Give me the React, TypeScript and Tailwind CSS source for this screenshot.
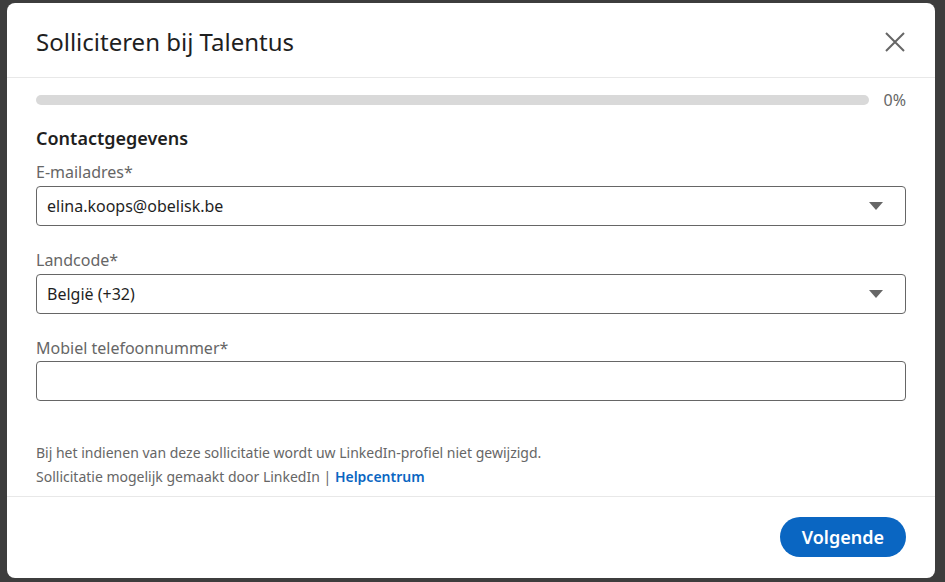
import React, { useState } from 'react';

const Caret: React.FC = () => (
    <svg width="16" height="8" viewBox="0 0 16 8" className="shrink-0">
        <path d="M1 0 H15 L8 8 Z" fill="#666666" />
    </svg>
);

const SelectField: React.FC<{ label: string; value: string }> = ({ label, value }) => (
    <div className="mt-[22px]">
        <div className="text-[16px] leading-[24px] text-[#666666]">{label}</div>
        <div className="mt-[2px] h-[40px] flex items-center justify-between rounded-[4px] border border-[#666666] pl-[10px] pr-[21px]">
            <span className="text-[16px] text-[#1f1f1f]">{value}</span>
            <Caret />
        </div>
    </div>
);

export default function App() {
    const [phone, setPhone] = useState('');

    return (
        <div className="w-[945px] h-[582px] bg-[#3d3d3d] pt-[3px] pl-[7px] font-['Noto_Sans',sans-serif] overflow-hidden">
            <div className="w-[928px] h-[575px] bg-white rounded-[8px] flex flex-col overflow-hidden">
                <div className="h-[75px] shrink-0 border-b border-[#e8e8e8] flex items-center justify-between pl-[29px] pr-[30px]">
                    <h2 className="mt-[3px] text-[24px] text-[#1f1f1f] leading-none">Solliciteren bij Talentus</h2>
                    <svg width="20" height="20" viewBox="0 0 20 20" className="mt-[3px]">
                        <path d="M1 1 L19 19 M19 1 L1 19" stroke="#666666" strokeWidth="2" />
                    </svg>
                </div>

                <div className="flex-1 px-[29px] pt-[10px]">
                    <div className="h-[24px] flex items-center">
                        <div className="flex-1 h-[10px] rounded-full bg-[#d9d9d9]" />
                        <span className="ml-[15px] text-[16px] text-[#666666]">0%</span>
                    </div>

                    <h3 className="mt-[14px] text-[18px] leading-[24px] font-semibold text-[#1f1f1f]">Contactgegevens</h3>

                    <div className="-mt-[12px]">
                        <SelectField label="E-mailadres*" value="elina.koops@obelisk.be" />
                    </div>
                    <SelectField label="Landcode*" value="België (+32)" />

                    <div className="mt-[22px]">
                        <div className="text-[16px] leading-[24px] text-[#666666]">Mobiel telefoonnummer*</div>
                        <input
                            value={phone}
                            onChange={(e) => setPhone(e.target.value)}
                            className="mt-[1px] w-full h-[40px] rounded-[4px] border border-[#666666] px-[10px] text-[16px] outline-none"
                        />
                    </div>

                    <div className="mt-[40px] text-[14px] leading-[24px] text-[#666666]">
                        <p>Bij het indienen van deze sollicitatie wordt uw LinkedIn-profiel niet gewijzigd.</p>
                        <p>
                            Sollicitatie mogelijk gemaakt door LinkedIn | <a className="font-semibold text-[#0a66c2]">Helpcentrum</a>
                        </p>
                    </div>
                </div>

                <div className="h-[82px] shrink-0 border-t border-[#e8e8e8] flex items-start justify-end pt-[20px] pr-[29px]">
                    <button className="h-[40px] px-[22px] rounded-full bg-[#0a66c2] text-white text-[18px] font-semibold">
                        Volgende
                    </button>
                </div>
            </div>
        </div>
    );
}
